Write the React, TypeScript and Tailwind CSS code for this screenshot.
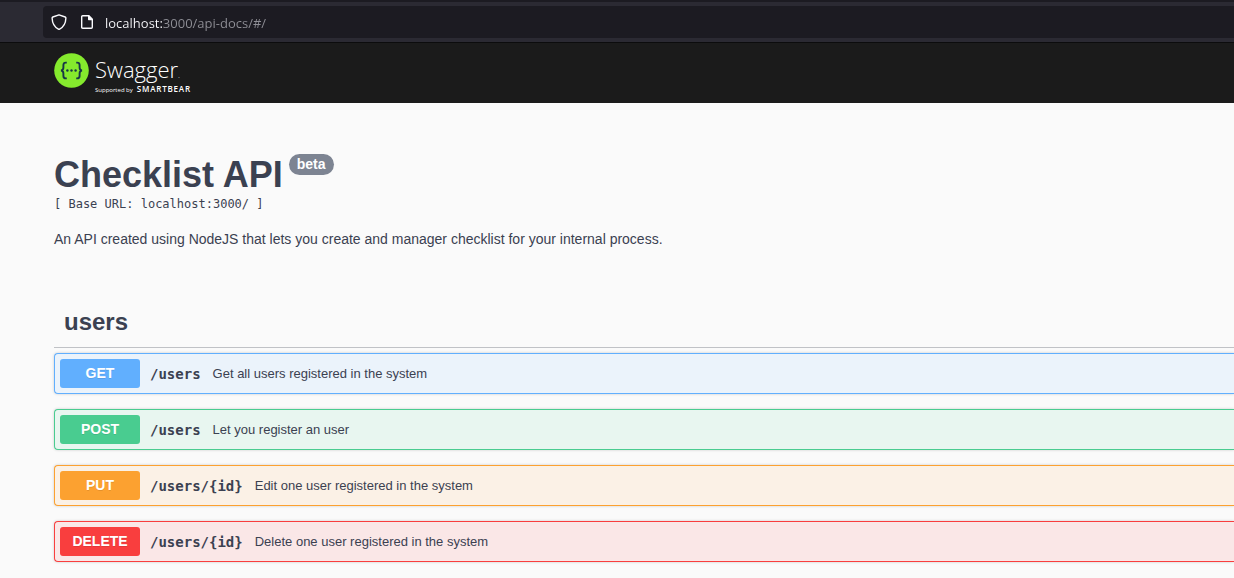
import React from "react";

type Operation = {
  method: string;
  path: string;
  summary: string;
  frame: string;
  badge: string;
};

const operations: Operation[] = [
  {
    method: "GET",
    path: "/users",
    summary: "Get all users registered in the system",
    frame: "border-[#61affe] bg-[#ebf3fb]",
    badge: "bg-[#61affe]",
  },
  {
    method: "POST",
    path: "/users",
    summary: "Let you register an user",
    frame: "border-[#49cc90] bg-[#e8f6f0]",
    badge: "bg-[#49cc90]",
  },
  {
    method: "PUT",
    path: "/users/{id}",
    summary: "Edit one user registered in the system",
    frame: "border-[#fca130] bg-[#fbf1e6]",
    badge: "bg-[#fca130]",
  },
  {
    method: "DELETE",
    path: "/users/{id}",
    summary: "Delete one user registered in the system",
    frame: "border-[#f93e3e] bg-[#fae7e7]",
    badge: "bg-[#f93e3e]",
  },
];

function ShieldIcon() {
  return (
    <svg width="16" height="16" viewBox="0 0 16 16" fill="none" stroke="#fbfbfe" strokeWidth="1.4" strokeLinejoin="round" aria-hidden="true">
      <path d="M8 .8 14.2 3c.5.2.7.5.7 1-.2 5-2.2 9-6.3 11.1-.4.2-.8.2-1.2 0C3.300 13 1.300 9 1.100 4c0-.5.2-.8.7-1z" />
    </svg>
  );
}

function PageIcon() {
  return (
    <svg width="12" height="14" viewBox="0 0 12 14" aria-hidden="true">
      <path d="M1.700.7h6.100l3.500 3.500v8.100c0 .6-.4 1-1 1H1.700c-.6 0-1-.4-1-1V1.700c0-.6.4-1 1-1z" fill="none" stroke="#fbfbfe" strokeWidth="1.4" />
      <path d="M7 .5h1.200L11.500 4v1.300H8c-.6 0-1-.4-1-1z" fill="#fbfbfe" />
    </svg>
  );
}

function AddressBar() {
  return (
    <div className="border-t-2 border-b border-t-[#1c1b22] border-b-[#0c0c0d] bg-[#2b2a33] py-1 pl-[43px]">
      <div className="flex h-8 items-center rounded-l bg-[#1c1b22] pl-2">
        <ShieldIcon />
        <span className="ml-3.5 flex">
          <PageIcon />
        </span>
        <input
          type="text"
          aria-label="Address"
          defaultValue="localhost:3000/api-docs/#/"
          className="ml-3 h-6 flex-1 bg-[linear-gradient(90deg,#fbfbfe_57px,#8f8f96_57px)] bg-clip-text pt-px font-['Open_Sans',sans-serif] text-[13px] text-transparent outline-none"
        />
      </div>
    </div>
  );
}

function Logo() {
  return (
    <a href="#/" className="flex items-start gap-1.5 font-['Open_Sans',sans-serif] text-white">
      <svg width="35" height="35" viewBox="0 0 35 35" aria-hidden="true">
        <circle cx="17.500" cy="17.500" r="17.300" fill="#85ea2d" />
        <g fill="none" stroke="#173647" strokeWidth="1.900">
          <path d="M12.800 9.600h-.9c-1.700 0-2.500.8-2.500 2.400v2.600c0 1.700-.7 2.700-2.400 2.900 1.700.2 2.400 1.200 2.400 2.900V23c0 1.600.8 2.400 2.500 2.400h.9" />
          <path d="M22.200 9.600h.9c1.700 0 2.500.8 2.500 2.400v2.600c0 1.700.7 2.700 2.400 2.900-1.700.2-2.400 1.200-2.400 2.900V23c0 1.600-.8 2.400-2.500 2.400h-.9" />
        </g>
        <g fill="#173647">
          <circle cx="13.400" cy="17.500" r="1.200" />
          <circle cx="17.500" cy="17.500" r="1.200" />
          <circle cx="21.600" cy="17.500" r="1.200" />
        </g>
      </svg>
      <span className="flex flex-col">
        <span className="flex items-baseline text-[22px] leading-8 font-light">
          Swagger<span className="text-[8px] leading-none">.</span>
        </span>
        <span className="flex items-baseline gap-1 text-[6px] leading-2">
          Supported by
          <span className="text-[8px] font-semibold tracking-widest">SMARTBEAR</span>
        </span>
      </span>
    </a>
  );
}

function OperationRow({ method, path, summary, frame, badge }: Operation) {
  return (
    <li>
      <button
        type="button"
        className={`flex w-full items-center rounded-l border border-r-0 p-[5px] text-left shadow-[0_0_3px_rgba(0,0,0,0.19)] ${frame}`}
      >
        <span
          className={`w-20 rounded-[3px] text-center text-sm leading-[29px] font-bold text-white [text-shadow:0_1px_0_rgba(0,0,0,0.1)] ${badge}`}
        >
          {method}
        </span>
        <span className="ml-2.5 font-['DejaVu_Sans_Mono',monospace] text-sm font-bold">{path}</span>
        <span className="ml-3 text-[13px]">{summary}</span>
      </button>
    </li>
  );
}

export default function App() {
  return (
    <div className="min-h-screen overflow-x-hidden bg-[#fafafa] font-['Liberation_Sans',Arial,sans-serif] text-[#3b4151]">
      <AddressBar />
      <header className="flex h-[60px] items-start bg-[#1b1b1b] pt-2.5 pl-[54px]">
        <Logo />
      </header>
      <main className="pl-[54px]">
        <section className="pt-[51px]">
          <h1 className="flex items-start gap-1.5 text-4xl leading-[42px] font-bold">
            Checklist API
            <span className="rounded-full bg-[#7d8492] px-2 text-sm leading-[21px] text-white">beta</span>
          </h1>
          <p className="font-['DejaVu_Sans_Mono',monospace] text-xs leading-4">[ Base URL: localhost:3000/ ]</p>
          <p className="mt-[17px] text-sm">An API created using NodeJS that lets you create and manager checklist for your internal process.</p>
        </section>
        <section className="pt-[57px]">
          <h2 className="border-b border-[#3b4151]/30 pb-[9px] pl-2.5 text-2xl font-bold">users</h2>
          <ul className="mt-[5px] flex flex-col gap-[15px]">
            {operations.map((operation) => (
              <OperationRow key={operation.method} {...operation} />
            ))}
          </ul>
        </section>
      </main>
    </div>
  );
}
